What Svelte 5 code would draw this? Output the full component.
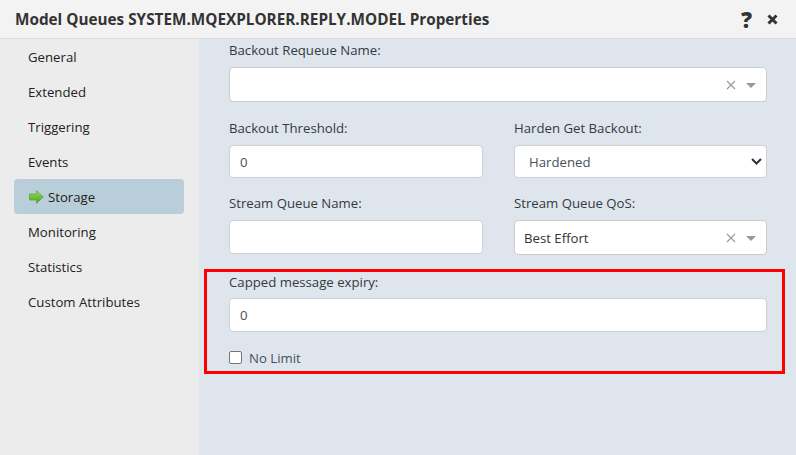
<script>
  const nav = ['General', 'Extended', 'Triggering', 'Events', 'Storage', 'Monitoring', 'Statistics', 'Custom Attributes'];
</script>

{#snippet combo(text)}
  <div class="combo">
    <span class="combo-text">{text}</span>
    <svg class="clear" width="10" height="10" viewBox="0 0 10 10"><path d="M1 1l8 8M9 1l-8 8" stroke="#999" stroke-width="1.1" fill="none"/></svg>
    <svg class="caret" width="10" height="5" viewBox="0 0 10 5"><path d="M0 0h10L5 5z" fill="#999"/></svg>
  </div>
{/snippet}

<div class="dialog">
  <header class="head">
    <h1>Model Queues SYSTEM.MQEXPLORER.REPLY.MODEL Properties</h1>
    <div class="tools">
      <span class="help">?</span>
      <svg width="11" height="11" viewBox="0 0 11 11"><path d="M1.500 1.500l8 8M9.500 1.500l-8 8" stroke="#333" stroke-width="3" fill="none"/></svg>
    </div>
  </header>
  <div class="body">
    <nav class="side">
      {#each nav as item}
        <div class="item" class:active={item === 'Storage'}>
          {#if item === 'Storage'}
            <svg class="arrow" width="15" height="14" viewBox="0 0 15 14">
              <defs>
                <linearGradient id="go" x1="0" y1="0" x2="0" y2="1">
                  <stop offset="0" stop-color="#9be05a"/>
                  <stop offset="1" stop-color="#36a81c"/>
                </linearGradient>
              </defs>
              <path d="M0.500 4h7V0.700L14.300 7 7.500 13.300V10h-7z" fill="url(#go)" stroke="#6f9a5a" stroke-width="0.800"/>
            </svg>
          {/if}
          {item}
        </div>
      {/each}
    </nav>
    <main class="main">
      <div class="field first">
        <label>Backout Requeue Name:</label>
        {@render combo('')}
      </div>
      <div class="grid">
        <div class="field">
          <label>Backout Threshold:</label>
          <div class="input">0</div>
        </div>
        <div class="field">
          <label>Harden Get Backout:</label>
          <div class="input select">
            <span>Hardened</span>
            <svg width="11" height="7" viewBox="0 0 11 7"><path d="M1 1l4.500 4.500L10 1" stroke="#333" stroke-width="2" fill="none"/></svg>
          </div>
        </div>
        <div class="field">
          <label>Stream Queue Name:</label>
          <div class="input tall"></div>
        </div>
        <div class="field">
          <label>Stream Queue QoS:</label>
          {@render combo('Best Effort')}
        </div>
      </div>
      <div class="field capped">
        <label>Capped message expiry:</label>
        <div class="input">0</div>
      </div>
      <div class="check">
        <span class="box"></span>
        <span>No Limit</span>
      </div>
      <div class="annotation"></div>
    </main>
  </div>
</div>

<style>
  :global(body) { margin: 0; }
  .dialog {
    width: 796px; height: 455px; overflow: hidden; display: flex; flex-direction: column;
    font-family: "Open Sans", "Noto Sans", sans-serif; font-size: 13.200px; color: #212529;
  }
  .head {
    height: 39px; box-sizing: border-box; flex: none; display: flex; align-items: center; justify-content: space-between;
    padding: 0 18px 0 15px; background: #f3f3f3; border-bottom: 1px solid #dcdcdc;
  }
  h1 { margin: 0; font-size: 15.300px; font-weight: 700; color: #333; }
  .tools { display: flex; align-items: center; gap: 15px; }
  .help { font-size: 22px; font-weight: 800; color: #333; line-height: 1; }
  .body { flex: 1; display: flex; min-height: 0; }
  .side { width: 199px; flex: none; background: #ececec; padding: 0 15px 0 14px; box-sizing: border-box; }
  .item { height: 35px; display: flex; align-items: center; gap: 4px; padding-left: 14px; border-radius: 4px; color: #222; }
  .item.active { background: #b9ced8; padding-left: 15px; }
  .main {
    flex: 1; position: relative; background: #dfe5ed; padding: 0 29px 0 30px; color: #343a40;
  }
  .field { display: flex; flex-direction: column; }
  label { display: block; height: 17px; line-height: 17px; margin-bottom: 8px; color: #343a40; }
  .first label { margin-top: 3px; }
  .first { margin-bottom: 18px; }
  .grid { display: grid; grid-template-columns: 254px 253px; column-gap: 31px; row-gap: 17px; }
  .input {
    height: 33px; box-sizing: border-box; background: #fff; border: 1px solid #ccd1d6; border-radius: 4px;
    display: flex; align-items: center; padding: 0 12px 0 10px; color: #495057;
  }
  .tall { height: 34px; }
  .select { justify-content: space-between; padding: 0 4px 0 14px; }
  .combo {
    height: 35px; box-sizing: border-box; background: #fff; border: 1px solid #ccc; border-radius: 4px;
    display: flex; align-items: center; padding: 0 10px 0 9px; color: #333;
  }
  .combo-text { flex: 1; }
  .clear { margin-right: 10px; margin-top: 1px; }
  .caret { margin-top: 1px; }
  .capped { margin-top: 19px; }
  .capped label { margin-bottom: 7px; }
  .capped .input { height: 34px; }
  .check { display: flex; align-items: center; gap: 7px; margin-top: 17px; height: 17px; color: #495057; }
  .box { width: 13px; height: 13px; box-sizing: border-box; background: #fff; border: 1px solid #767676; border-radius: 2px; }
  .annotation {
    position: absolute; left: 5px; top: 230px; width: 581px; height: 105px; box-sizing: border-box;
    border: 3px solid #f00;
  }
</style>
